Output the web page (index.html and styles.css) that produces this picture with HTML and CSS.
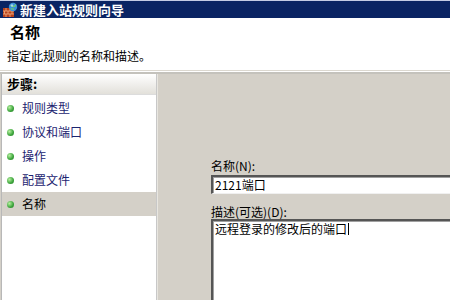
FILE: index.html
```html
<!DOCTYPE html>
<html lang="zh-CN">
<head>
    <meta charset="UTF-8">
    <title>新建入站规则向导</title>
    <link rel="stylesheet" href="styles.css">
</head>
<body>
    <div class="titlebar">
        <svg class="app-icon" width="16" height="16" viewBox="0 0 16 16">
            <rect x="1" y="6" width="11" height="9" fill="#b8401c"/>
            <path d="M1 9h11M1 12h11M4 6v3M8 6v3M2.5 9v3M6 9v3M10 9v3M4 12v3M8 12v3" stroke="#f0b080" stroke-width="0.8"/>
            <circle cx="11" cy="5" r="4.2" fill="#3a8fd8"/>
            <path d="M8.5 3.5c1.5 0 2 1.5 3.5 1s1-2 2-1.5M9 7c1-.5 2 .5 3 0" stroke="#6fd06a" stroke-width="1.2" fill="none"/>
            <circle cx="10" cy="3.5" r="1.2" fill="#cfe8ff" opacity="0.7"/>
        </svg>
        <span class="title">新建入站规则向导</span>
    </div>

    <div class="header">
        <h1>名称</h1>
        <p>指定此规则的名称和描述。</p>
    </div>
    <div class="divider"></div>

    <div class="main">
        <div class="steps">
            <div class="steps-head">步骤:</div>
            <ul class="step-list">
                <li><span class="dot"></span>规则类型</li>
                <li><span class="dot"></span>协议和端口</li>
                <li><span class="dot"></span>操作</li>
                <li><span class="dot"></span>配置文件</li>
                <li class="current"><span class="dot"></span>名称</li>
            </ul>
        </div>

        <div class="content">
            <label class="field-label" for="ruleName">名称(N):</label>
            <div class="textbox" id="ruleName">2121端口</div>
            <label class="field-label second" for="ruleDesc">描述(可选)(D):</label>
            <div class="textarea" id="ruleDesc">远程登录的修改后的端口<span class="caret"></span></div>
        </div>
    </div>
</body>
</html>
```

FILE: styles.css
```css
body {
    margin: 0;
    width: 450px;
    height: 300px;
    overflow: hidden;
    background-color: #d4d0c8;
    font-family: "Noto Sans CJK SC", "Liberation Sans", sans-serif;
    font-size: 12px;
    color: #000;
}

.titlebar {
    height: 17px;
    border-top: 1px solid #c4cce4;
    background-color: #0a2463;
    display: flex;
    align-items: center;
    padding-left: 2px;
    gap: 2px;
}

.title {
    color: white;
    font-weight: bold;
    font-size: 13px;
    line-height: 17px;
}

.header {
    height: 52px;
    background-color: #fff;
    overflow: hidden;
}

.header h1 {
    margin: 4px 0 0 10px;
    font-size: 15px;
    line-height: 20px;
    font-weight: bold;
}

.header p {
    margin: 6px 0 0 7px;
    font-size: 12px;
    line-height: 16px;
}

.divider {
    height: 1px;
    background-color: #dcd8d0;
    border-bottom: 1px solid #fff;
    box-shadow: 0 2px 0 #c4c2bc;
    margin-bottom: 2px;
}

.main {
    display: flex;
    height: 226px;
}

.steps {
    width: 154px;
    margin-left: 1px;
    background-color: #fff;
    border-left: 1px solid #b8b8b8;
    border-right: 1px solid #c8c8c8;
}

.steps-head {
    height: 20px;
    line-height: 20px;
    padding-left: 5px;
    font-weight: bold;
    font-size: 13px;
    background: linear-gradient(#ffffff, #e2e0da);
    border-bottom: 1px solid #dcdcdc;
}

.step-list {
    list-style: none;
    margin: 1px 0 0;
    padding: 0;
}

.step-list li {
    height: 24px;
    line-height: 24px;
    display: flex;
    align-items: center;
    color: #1c2470;
    font-size: 12px;
}

.step-list li.current {
    background-color: #d4d0c8;
    color: #000;
}

.dot {
    width: 7px;
    height: 7px;
    border-radius: 50%;
    margin: 0 8px 0 5px;
    background: radial-gradient(circle at 35% 35%, #b6f0a0, #3aa33a 60%, #267a26);
}

.content {
    flex: 1;
    padding: 84px 0 0 53px;
    border-left: 1px solid #e8e6e0;
    overflow: hidden;
}

.field-label {
    display: block;
    height: 17px;
    line-height: 16px;
}

.field-label.second {
    margin-top: 10px;
    height: 15px;
}

.textbox, .textarea {
    width: 260px;
    background-color: #fff;
    border-style: solid;
    border-width: 2px 1px 1px 2px;
    border-color: #555 #f0f0f0 #f0f0f0 #555;
    box-shadow: inset 1px 1px 0 #a0a0a0;
    padding: 0 2px;
    line-height: 16px;
}

.textbox {
    height: 16px;
}

.textarea {
    height: 90px;
}

.caret {
    display: inline-block;
    width: 1px;
    height: 12px;
    background-color: #000;
    vertical-align: -1px;
    margin-left: 1px;
}
```
